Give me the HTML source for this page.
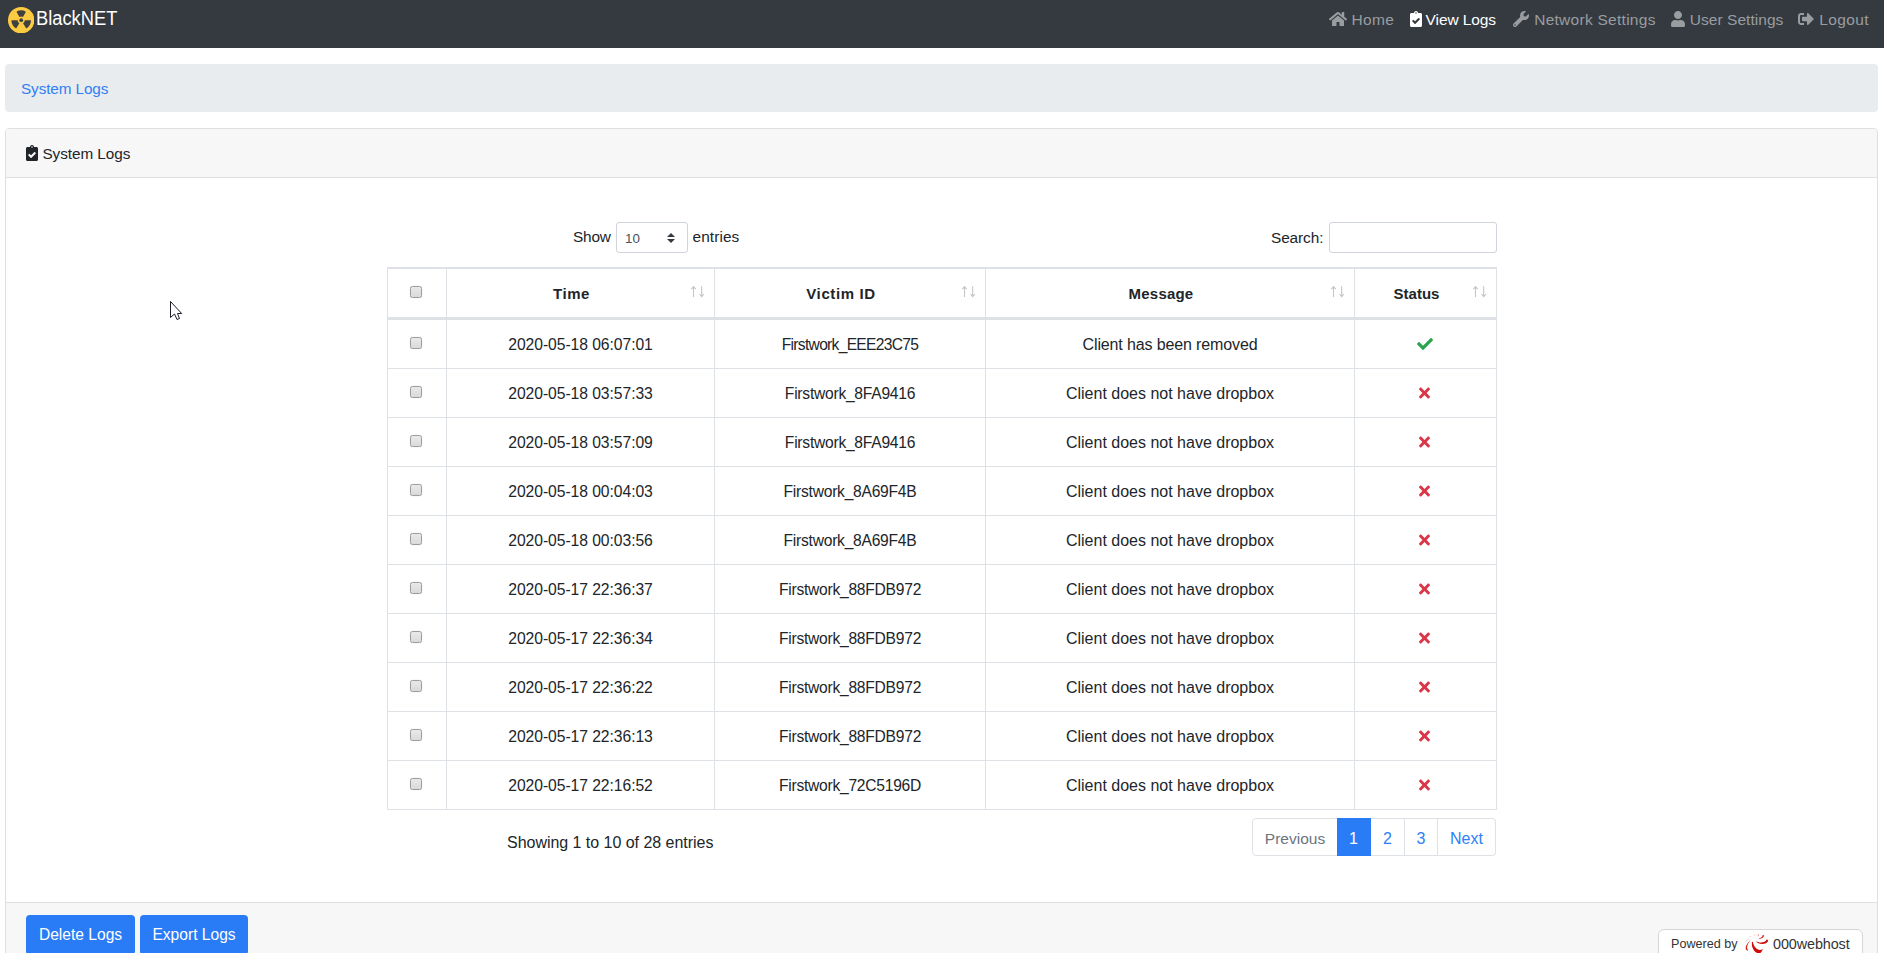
<!DOCTYPE html>
<html lang="en">
<head>
<meta charset="utf-8">
<title>BlackNET - View Logs</title>
<style>
*{box-sizing:border-box;}
html,body{margin:0;padding:0;}
body{width:1884px;height:953px;overflow:hidden;background:#fff;font-family:"Liberation Sans",sans-serif;font-size:16px;color:#212529;position:relative;}
a{text-decoration:none;}
.abs{position:absolute;white-space:nowrap;}
#nav{position:absolute;left:0;top:0;width:1884px;height:48px;background:#343a40;}
.brand{position:absolute;left:36.3px;top:0;height:40px;line-height:37px;font-size:20px;color:#fff;white-space:nowrap;transform:scaleX(0.915);transform-origin:0 0;}
.nl{position:absolute;top:0px;height:40px;line-height:40px;font-size:15.5px;color:#9a9da0;white-space:nowrap;}
.nl.act{color:#fff;}
.ni{position:absolute;display:block;}
#bc{position:absolute;left:5px;top:64px;width:1873px;height:48px;background:#e9ecef;border-radius:4px;}
#bc a{position:absolute;left:16px;top:1px;line-height:48px;font-size:15.3px;letter-spacing:-0.1px;color:#2f80f5;}
#card{position:absolute;left:5px;top:128px;width:1873px;height:840px;border:1px solid #dfdfdf;border-radius:4px;background:#fff;}
#chead{position:absolute;left:0;top:0;width:1871px;height:49px;background:#f7f7f7;border-bottom:1px solid #dfdfdf;border-radius:3px 3px 0 0;}
#cfoot{position:absolute;left:0;top:773px;width:1871px;height:70px;background:#f7f7f7;border-top:1px solid #dfdfdf;}
.btn{position:absolute;top:915px;height:40px;background:#2a7bf6;border-radius:4px;color:#fff;font-size:15.6px;line-height:40px;text-align:center;white-space:nowrap;}
#tbl{position:absolute;left:387px;top:267px;width:1110px;border-collapse:separate;border-spacing:0;border:1px solid #dee2e6;table-layout:fixed;}
#tbl th,#tbl td{border:1px solid #dee2e6;border-left-width:0;border-bottom-width:0;text-align:center;padding:0;white-space:nowrap;position:relative;}
#tbl th:last-child,#tbl td:last-child{border-right-width:0;}
#tbl th{height:51px;border-bottom:2px solid #dee2e6;font-weight:bold;font-size:15px;}
#tbl td{height:49px;font-size:15.7px;letter-spacing:-0.06px;padding-top:1px;}
#tbl td.cv{font-size:15.6px;letter-spacing:-0.24px;}
#tbl td.cm{font-size:16px;letter-spacing:0;}
.hl{padding-right:18px;}
.cb{position:absolute;left:22px;width:12px;height:12px;border:1px solid #9d9d9d;border-radius:2.5px;background:linear-gradient(#e9e9e9,#dadada);box-shadow:0 0 1px rgba(0,0,0,.25);}
.sel{position:absolute;left:616px;top:222px;width:72px;height:31px;border:1px solid #ced4da;border-radius:3px;background:#fff;}
.inp{position:absolute;left:1329px;top:222px;width:168px;height:31px;border:1px solid #ced4da;border-radius:3px;background:#fff;}
.pg{position:absolute;top:818px;height:38px;border:1px solid #dee2e6;border-left-width:0;background:#fff;font-size:16px;line-height:40px;text-align:center;color:#2f80f5;}
#wh{position:absolute;left:1658px;top:929px;width:204.500px;height:40px;border:1px solid #d6d6d6;border-radius:6px;background:#fff;}
</style>
</head>
<body>
<div id="nav">
<svg class="ni" style="left:7.8px;top:6.7px" width="26.4" height="26.4" viewBox="0 0 26.4 26.4"><circle cx="13.2" cy="13.2" r="13.2" fill="#fccb41"/><path fill="#403f41" d="M11.45 10.05L8.45 4.63A9.8 9.8 0 0 1 17.95 4.63L14.95 10.05A3.6 3.6 0 0 0 11.45 10.05ZM16.80 13.26L23.00 13.37A9.8 9.8 0 0 1 18.25 21.60L15.05 16.29A3.6 3.6 0 0 0 16.80 13.26ZM11.35 16.29L8.15 21.60A9.8 9.8 0 0 1 3.40 13.37L9.60 13.26A3.6 3.6 0 0 0 11.35 16.29Z"/><circle cx="13.2" cy="13.2" r="1.9" fill="#403f41"/></svg>
<div class="brand">BlackNET</div>
<svg class="ni" style="left:1328.5px;top:11px;" width="18" height="16" viewBox="0 0 576 512"><path fill="#9a9da0" d="M280.37 148.26L96 300.11V464a16 16 0 0 0 16 16l112.06-.29a16 16 0 0 0 15.92-16V368a16 16 0 0 1 16-16h64a16 16 0 0 1 16 16v95.64a16 16 0 0 0 16 16.05L464 480a16 16 0 0 0 16-16V300L295.67 148.26a12.19 12.19 0 0 0-15.3 0zM571.6 251.47L488 182.56V44.05a12 12 0 0 0-12-12h-56a12 12 0 0 0-12 12v72.61L318.47 43a48 48 0 0 0-61 0L4.34 251.47a12 12 0 0 0-1.6 16.9l25.5 31A12 12 0 0 0 45.15 301l235.22-193.74a12.19 12.19 0 0 1 15.3 0L530.9 301a12 12 0 0 0 16.9-1.6l25.5-31a12 12 0 0 0-1.7-16.93z"/></svg><div class="nl" style="left:1351.5px;letter-spacing:0.35px">Home</div>
<svg class="ni" style="left:1409.5px;top:11px;" width="12" height="16" viewBox="0 0 384 512"><path fill="#fff" d="M336 64h-80c0-35.3-28.7-64-64-64s-64 28.7-64 64H48C21.5 64 0 85.5 0 112v352c0 26.5 21.5 48 48 48h288c26.5 0 48-21.5 48-48V112c0-26.5-21.5-48-48-48zM192 40c13.3 0 24 10.7 24 24s-10.700 24-24 24-24-10.700-24-24 10.700-24 24-24zm121.200 231.800l-143 141.800c-4.700 4.700-12.300 4.600-17-.1l-82.600-83.300c-4.700-4.700-4.600-12.300.1-17L99.100 285c4.700-4.700 12.300-4.600 17 .1l46 46.400 106-105.200c4.700-4.700 12.300-4.600 17 .1l28.200 28.400c4.700 4.800 4.600 12.300-.1 17z"/></svg><div class="nl act" style="left:1425.6px;letter-spacing:-0.1px">View Logs</div>
<svg class="ni" style="left:1513px;top:11px;" width="16" height="16" viewBox="0 0 512 512"><path fill="#9a9da0" d="M507.73 109.1c-2.240-9.030-13.540-12.090-20.120-5.510l-74.360 74.360-67.880-11.310-11.310-67.880 74.360-74.360c6.620-6.620 3.430-17.900-5.660-20.160-47.380-11.740-99.550.91-136.580 37.930-39.640 39.640-50.550 97.100-34.050 147.200L18.740 402.760c-24.990 24.990-24.990 65.510 0 90.500 24.990 24.990 65.510 24.990 90.500 0l213.210-213.210c50.120 16.710 107.470 5.680 147.370-34.220 37.070-37.070 49.700-89.320 37.910-136.730zM64 472c-13.250 0-24-10.750-24-24 0-13.260 10.750-24 24-24s24 10.740 24 24c0 13.250-10.750 24-24 24z"/></svg><div class="nl" style="left:1534.2px;letter-spacing:0.27px">Network Settings</div>
<svg class="ni" style="left:1671px;top:11px;" width="14" height="16" viewBox="0 0 448 512"><path fill="#9a9da0" d="M224 256c70.7 0 128-57.3 128-128S294.7 0 224 0 96 57.3 96 128s57.3 128 128 128zm89.6 32h-16.7c-22.2 10.2-46.900 16-72.900 16s-50.600-5.800-72.900-16h-16.700C60.200 288 0 348.200 0 422.400V464c0 26.500 21.500 48 48 48h352c26.500 0 48-21.500 48-48v-41.600c0-74.200-60.200-134.400-134.400-134.400z"/></svg><div class="nl" style="left:1689.8px;letter-spacing:0.04px">User Settings</div>
<svg class="ni" style="left:1798px;top:11px;" width="16" height="16" viewBox="0 0 512 512"><path fill="#9a9da0" d="M497 273L329 441c-15 15-41 4.500-41-17v-96H152c-13.300 0-24-10.700-24-24v-96c0-13.300 10.700-24 24-24h136V88c0-21.400 25.900-32 41-17l168 168c9.300 9.400 9.300 24.600 0 34zM192 436v-40c0-6.600-5.400-12-12-12H96c-17.700 0-32-14.300-32-32V160c0-17.700 14.300-32 32-32h84c6.600 0 12-5.400 12-12V76c0-6.600-5.400-12-12-12H96c-53 0-96 43-96 96v192c0 53 43 96 96 96h84c6.600 0 12-5.400 12-12z"/></svg><div class="nl" style="left:1819.2px;letter-spacing:0.38px">Logout</div>
</div>
<div id="bc"><a>System Logs</a></div>
<div id="card">
<div id="chead"><div class="abs" style="left:36.4px;top:0;line-height:49px;font-size:15.3px;letter-spacing:-0.05px">System Logs</div></div>
<div id="cfoot"></div>
</div>
<svg class="ni" style="left:26px;top:145px;" width="12" height="16" viewBox="0 0 384 512"><path fill="#212529" d="M336 64h-80c0-35.3-28.7-64-64-64s-64 28.7-64 64H48C21.5 64 0 85.5 0 112v352c0 26.5 21.5 48 48 48h288c26.5 0 48-21.5 48-48V112c0-26.5-21.5-48-48-48zM192 40c13.3 0 24 10.7 24 24s-10.700 24-24 24-24-10.700-24-24 10.700-24 24-24zm121.200 231.800l-143 141.800c-4.700 4.700-12.300 4.600-17-.1l-82.600-83.300c-4.700-4.700-4.600-12.300.1-17L99.100 285c4.700-4.700 12.300-4.600 17 .1l46 46.400 106-105.200c4.700-4.700 12.300-4.600 17 .1l28.200 28.400c4.700 4.800 4.600 12.300-.1 17z"/></svg>
<div class="abs" style="left:573px;top:222px;line-height:30px;font-size:15.4px;letter-spacing:-0.2px">Show</div>
<div class="sel"><div class="abs" style="left:8px;top:0px;line-height:31px;font-size:13.4px;color:#495057;">10</div><svg class="ni" style="left:50.4px;top:9.6px" width="8" height="10" viewBox="0 0 4 5"><path fill="#343a40" d="M2 0L0 2h4zm0 5L0 3h4z"/></svg></div>
<div class="abs" style="left:692.5px;top:222px;line-height:30px;font-size:15.4px;letter-spacing:0.1px">entries</div>
<div class="abs" style="left:1271px;top:222px;line-height:31px;font-size:15.4px;letter-spacing:-0.1px">Search:</div>
<div class="inp"></div>
<table id="tbl">
<colgroup><col style="width:59px"><col style="width:268px"><col style="width:271px"><col style="width:369px"><col style="width:141px"></colgroup>
<thead><tr>
<th><span class="cb" style="top:17px"></span></th>
<th><span class="hl" style="letter-spacing:0.6px">Time</span></th>
<th><span class="hl" style="letter-spacing:0.62px">Victim ID</span></th>
<th><span class="hl" style="letter-spacing:0.2px">Message</span></th>
<th><span class="hl" style="letter-spacing:0.02px">Status</span></th>
</tr></thead>
<tbody>
<tr><td><span class="cb" style="top:17px"></span></td><td class="ct">2020-05-18 06:07:01</td><td class="cv" style="letter-spacing:-0.7px">Firstwork_EEE23C75</td><td class="cm" style="letter-spacing:-0.13px">Client has been removed</td><td></td></tr>
<tr><td><span class="cb" style="top:17px"></span></td><td class="ct">2020-05-18 03:57:33</td><td class="cv">Firstwork_8FA9416</td><td class="cm">Client does not have dropbox</td><td></td></tr>
<tr><td><span class="cb" style="top:17px"></span></td><td class="ct">2020-05-18 03:57:09</td><td class="cv">Firstwork_8FA9416</td><td class="cm">Client does not have dropbox</td><td></td></tr>
<tr><td><span class="cb" style="top:17px"></span></td><td class="ct">2020-05-18 00:04:03</td><td class="cv">Firstwork_8A69F4B</td><td class="cm">Client does not have dropbox</td><td></td></tr>
<tr><td><span class="cb" style="top:17px"></span></td><td class="ct">2020-05-18 00:03:56</td><td class="cv">Firstwork_8A69F4B</td><td class="cm">Client does not have dropbox</td><td></td></tr>
<tr><td><span class="cb" style="top:17px"></span></td><td class="ct">2020-05-17 22:36:37</td><td class="cv">Firstwork_88FDB972</td><td class="cm">Client does not have dropbox</td><td></td></tr>
<tr><td><span class="cb" style="top:17px"></span></td><td class="ct">2020-05-17 22:36:34</td><td class="cv">Firstwork_88FDB972</td><td class="cm">Client does not have dropbox</td><td></td></tr>
<tr><td><span class="cb" style="top:17px"></span></td><td class="ct">2020-05-17 22:36:22</td><td class="cv">Firstwork_88FDB972</td><td class="cm">Client does not have dropbox</td><td></td></tr>
<tr><td><span class="cb" style="top:17px"></span></td><td class="ct">2020-05-17 22:36:13</td><td class="cv">Firstwork_88FDB972</td><td class="cm">Client does not have dropbox</td><td></td></tr>
<tr><td><span class="cb" style="top:17px"></span></td><td class="ct">2020-05-17 22:16:52</td><td class="cv">Firstwork_72C5196D</td><td class="cm">Client does not have dropbox</td><td></td></tr>
</tbody>
</table>
<svg class="ni" style="left:689px;top:285px" width="20" height="14" viewBox="0 0 20 14"><g fill="none" stroke="#c3c5c7" stroke-width="1.1"><path d="M4.5 12V1.6M2.3 4.2L4.5 1.6L6.7 4.2"/><path d="M12.7 1.2V11.6M10.5 9L12.7 11.6L14.9 9"/></g></svg>
<svg class="ni" style="left:960px;top:285px" width="20" height="14" viewBox="0 0 20 14"><g fill="none" stroke="#c3c5c7" stroke-width="1.1"><path d="M4.5 12V1.6M2.3 4.2L4.5 1.6L6.7 4.2"/><path d="M12.7 1.2V11.6M10.5 9L12.7 11.6L14.9 9"/></g></svg>
<svg class="ni" style="left:1329px;top:285px" width="20" height="14" viewBox="0 0 20 14"><g fill="none" stroke="#c3c5c7" stroke-width="1.1"><path d="M4.5 12V1.6M2.3 4.2L4.5 1.6L6.7 4.2"/><path d="M12.7 1.2V11.6M10.5 9L12.7 11.6L14.9 9"/></g></svg>
<svg class="ni" style="left:1471px;top:285px" width="20" height="14" viewBox="0 0 20 14"><g fill="none" stroke="#c3c5c7" stroke-width="1.1"><path d="M4.5 12V1.6M2.3 4.2L4.5 1.6L6.7 4.2"/><path d="M12.7 1.2V11.6M10.5 9L12.7 11.6L14.9 9"/></g></svg>
<svg class="ni" style="left:1417px;top:336px;" width="16" height="16" viewBox="0 0 512 512"><path fill="#2aa34a" d="M173.898 439.404l-166.400-166.400c-9.997-9.997-9.997-26.206 0-36.204l36.203-36.204c9.997-9.998 26.207-9.998 36.204 0L192 312.690 432.095 72.596c9.997-9.997 26.207-9.997 36.204 0l36.203 36.204c9.997 9.997 9.997 26.206 0 36.204l-294.400 294.401c-9.998 9.997-26.207 9.997-36.204-.001z"/></svg>
<svg class="ni" style="left:1418.8px;top:385px;" width="11" height="16" viewBox="0 0 352 512"><path fill="#db3648" d="M242.72 256l100.070-100.070c12.280-12.280 12.280-32.190 0-44.480l-22.240-22.240c-12.280-12.280-32.190-12.280-44.480 0L176 189.280 75.930 89.210c-12.280-12.280-32.190-12.280-44.480 0L9.210 111.450c-12.280 12.280-12.280 32.190 0 44.480L109.280 256 9.210 356.070c-12.280 12.280-12.280 32.190 0 44.480l22.240 22.240c12.280 12.280 32.200 12.280 44.480 0L176 322.720l100.070 100.070c12.280 12.280 32.200 12.280 44.480 0l22.240-22.240c12.280-12.280 12.280-32.190 0-44.480L242.720 256z"/></svg>
<svg class="ni" style="left:1418.8px;top:434px;" width="11" height="16" viewBox="0 0 352 512"><path fill="#db3648" d="M242.72 256l100.070-100.070c12.280-12.280 12.280-32.190 0-44.480l-22.240-22.240c-12.280-12.280-32.190-12.280-44.480 0L176 189.280 75.930 89.210c-12.280-12.280-32.190-12.280-44.480 0L9.210 111.450c-12.280 12.280-12.280 32.190 0 44.480L109.280 256 9.210 356.070c-12.280 12.280-12.280 32.190 0 44.480l22.240 22.240c12.280 12.280 32.200 12.280 44.480 0L176 322.720l100.070 100.070c12.280 12.280 32.200 12.280 44.480 0l22.240-22.240c12.280-12.280 12.280-32.190 0-44.480L242.720 256z"/></svg>
<svg class="ni" style="left:1418.8px;top:483px;" width="11" height="16" viewBox="0 0 352 512"><path fill="#db3648" d="M242.72 256l100.070-100.070c12.280-12.280 12.280-32.190 0-44.480l-22.240-22.240c-12.280-12.280-32.190-12.280-44.480 0L176 189.280 75.930 89.210c-12.280-12.280-32.190-12.280-44.480 0L9.210 111.450c-12.280 12.280-12.280 32.190 0 44.480L109.280 256 9.210 356.070c-12.280 12.280-12.280 32.190 0 44.480l22.240 22.240c12.280 12.280 32.200 12.280 44.480 0L176 322.720l100.070 100.070c12.280 12.280 32.200 12.280 44.480 0l22.240-22.240c12.280-12.280 12.280-32.190 0-44.480L242.720 256z"/></svg>
<svg class="ni" style="left:1418.8px;top:532px;" width="11" height="16" viewBox="0 0 352 512"><path fill="#db3648" d="M242.72 256l100.070-100.070c12.280-12.280 12.280-32.190 0-44.480l-22.240-22.240c-12.280-12.280-32.190-12.280-44.480 0L176 189.280 75.930 89.210c-12.280-12.280-32.190-12.280-44.480 0L9.210 111.450c-12.280 12.280-12.280 32.190 0 44.480L109.280 256 9.210 356.070c-12.280 12.280-12.280 32.190 0 44.480l22.240 22.240c12.280 12.280 32.200 12.280 44.480 0L176 322.720l100.070 100.070c12.280 12.280 32.200 12.280 44.480 0l22.240-22.240c12.280-12.280 12.280-32.190 0-44.480L242.720 256z"/></svg>
<svg class="ni" style="left:1418.8px;top:581px;" width="11" height="16" viewBox="0 0 352 512"><path fill="#db3648" d="M242.72 256l100.070-100.070c12.280-12.280 12.280-32.190 0-44.480l-22.240-22.240c-12.280-12.280-32.190-12.280-44.480 0L176 189.280 75.930 89.210c-12.280-12.280-32.190-12.280-44.480 0L9.210 111.450c-12.280 12.280-12.280 32.190 0 44.480L109.280 256 9.210 356.070c-12.280 12.280-12.280 32.190 0 44.480l22.240 22.240c12.280 12.280 32.200 12.280 44.480 0L176 322.720l100.070 100.070c12.280 12.280 32.200 12.280 44.480 0l22.240-22.240c12.280-12.280 12.280-32.190 0-44.480L242.720 256z"/></svg>
<svg class="ni" style="left:1418.8px;top:630px;" width="11" height="16" viewBox="0 0 352 512"><path fill="#db3648" d="M242.72 256l100.070-100.070c12.280-12.280 12.280-32.190 0-44.480l-22.240-22.240c-12.280-12.280-32.190-12.280-44.480 0L176 189.280 75.930 89.210c-12.280-12.280-32.190-12.280-44.480 0L9.210 111.450c-12.280 12.280-12.280 32.190 0 44.480L109.280 256 9.210 356.070c-12.280 12.280-12.280 32.190 0 44.480l22.240 22.240c12.280 12.280 32.200 12.280 44.480 0L176 322.720l100.070 100.070c12.280 12.280 32.200 12.280 44.480 0l22.240-22.240c12.280-12.280 12.280-32.190 0-44.480L242.720 256z"/></svg>
<svg class="ni" style="left:1418.8px;top:679px;" width="11" height="16" viewBox="0 0 352 512"><path fill="#db3648" d="M242.72 256l100.070-100.070c12.280-12.280 12.280-32.190 0-44.480l-22.240-22.240c-12.280-12.280-32.190-12.280-44.480 0L176 189.280 75.930 89.210c-12.280-12.280-32.190-12.280-44.480 0L9.210 111.450c-12.280 12.280-12.280 32.190 0 44.480L109.280 256 9.210 356.070c-12.280 12.280-12.280 32.190 0 44.480l22.240 22.240c12.280 12.280 32.200 12.280 44.480 0L176 322.720l100.070 100.070c12.280 12.280 32.200 12.280 44.480 0l22.240-22.240c12.280-12.280 12.280-32.190 0-44.480L242.720 256z"/></svg>
<svg class="ni" style="left:1418.8px;top:728px;" width="11" height="16" viewBox="0 0 352 512"><path fill="#db3648" d="M242.72 256l100.070-100.070c12.280-12.280 12.280-32.190 0-44.480l-22.240-22.240c-12.280-12.280-32.190-12.280-44.480 0L176 189.280 75.930 89.210c-12.280-12.280-32.190-12.280-44.480 0L9.210 111.450c-12.280 12.280-12.280 32.190 0 44.480L109.280 256 9.210 356.070c-12.280 12.280-12.280 32.190 0 44.480l22.240 22.240c12.280 12.280 32.200 12.280 44.480 0L176 322.720l100.070 100.070c12.280 12.280 32.200 12.280 44.480 0l22.240-22.240c12.280-12.280 12.280-32.190 0-44.480L242.720 256z"/></svg>
<svg class="ni" style="left:1418.8px;top:777px;" width="11" height="16" viewBox="0 0 352 512"><path fill="#db3648" d="M242.72 256l100.070-100.070c12.280-12.280 12.280-32.190 0-44.480l-22.240-22.240c-12.280-12.280-32.190-12.280-44.480 0L176 189.280 75.930 89.210c-12.280-12.280-32.190-12.280-44.480 0L9.210 111.450c-12.280 12.280-12.280 32.190 0 44.480L109.280 256 9.210 356.070c-12.280 12.280-12.280 32.190 0 44.480l22.240 22.240c12.280 12.280 32.200 12.280 44.480 0L176 322.720l100.070 100.070c12.280 12.280 32.200 12.280 44.480 0l22.240-22.240c12.280-12.280 12.280-32.190 0-44.480L242.720 256z"/></svg>
<div class="abs" style="left:507px;top:831px;line-height:24px;font-size:16px;letter-spacing:-0.03px">Showing 1 to 10 of 28 entries</div>
<div class="pg" style="left:1252px;width:86px;border-left-width:1px;border-radius:4px 0 0 4px;color:#6c757d;font-size:15.5px;">Previous</div>
<div class="pg" style="left:1337px;width:34px;background:#2a7bf6;border-color:#2a7bf6;color:#fff;">1</div>
<div class="pg" style="left:1371px;width:34px;">2</div>
<div class="pg" style="left:1405px;width:33px;">3</div>
<div class="pg" style="left:1438px;width:58px;border-radius:0 4px 4px 0;">Next</div>
<div class="btn" style="left:26px;width:109px;">Delete Logs</div>
<div class="btn" style="left:140px;width:108px;">Export Logs</div>
<div id="wh"><div class="abs" style="left:12px;top:4px;font-size:12.6px;line-height:20px;color:#333;">Powered by</div><div class="abs" style="left:114px;top:4px;font-size:14.4px;line-height:20px;color:#333;letter-spacing:-0.1px">000webhost</div></div>
<svg class="ni" style="left:1738px;top:928px" width="40" height="25" viewBox="0 0 1525 953"><g fill="#d20a06"><path d="M535 525C500 720 600 900 740 960L850 960C900 900 930 850 945 800C800 900 620 780 565 535Z"/><path d="M665 495C760 640 1080 660 1150 500C1150 460 1120 440 1090 440C1060 560 820 590 665 495Z"/><path d="M475 465C330 580 250 760 320 840L380 865C390 850 380 830 360 800C320 720 380 580 475 465Z" opacity=".9"/><path d="M765 395C850 440 960 400 1000 300C990 270 960 260 935 275C930 340 860 390 765 395Z" opacity=".85"/><path d="M735 232C800 235 815 290 765 325C775 290 760 260 735 232Z" opacity=".6"/><path d="M570 262C620 250 660 275 665 310C640 290 605 275 570 262Z" opacity=".4"/><path d="M390 350C440 310 520 320 560 350C500 345 440 345 390 350Z" opacity=".25"/><path d="M265 540C300 470 360 430 430 420C370 450 310 490 265 540Z" opacity=".3"/></g></svg>
<svg class="ni" style="left:168px;top:299px" width="16" height="24" viewBox="0 0 16 24"><path d="M2.5 2.500V18.500L6.500 15L9 20.500L11.500 19.500L9.500 14.500H13.700Z" fill="#fff" stroke="#1d1d28" stroke-width="1" stroke-linejoin="round"/></svg>
</body>
</html>
